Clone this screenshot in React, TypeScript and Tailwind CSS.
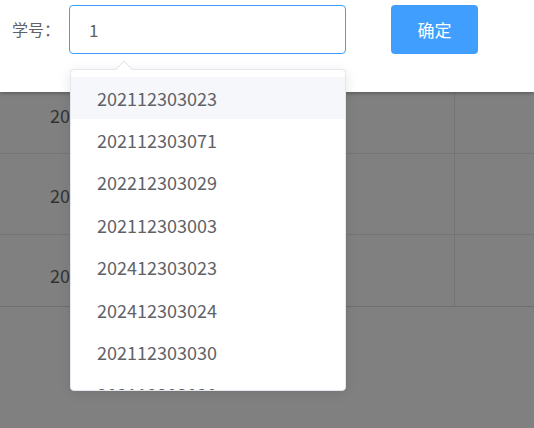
const options = [
  "202112303023",
  "202112303071",
  "202212303029",
  "202112303003",
  "202412303023",
  "202412303024",
  "202112303030",
  "202112303020",
]

const rows = [
  { h: "h-[62px]", pt: "pt-[11px]" },
  { h: "h-[81px]", pt: "pt-[29px]" },
  { h: "h-[72px]", pt: "pt-[28px]" },
]

export default function App() {
  return (
    <div
      className="relative h-[428px] w-[534px] overflow-hidden bg-[#808080]"
      style={{ fontFamily: '"Noto Sans CJK SC", "Noto Sans", sans-serif' }}
    >
      {/* search bar */}
      <div className="relative z-10 flex h-[92px] items-start bg-white pt-[5px] shadow-[0_1px_4px_rgba(0,0,0,0.35)]">
        <span className="ml-[12px] mt-[13px] w-[57px] text-[16px] leading-[22px] text-[#606266]">学号：</span>
        <div className="flex h-[49px] w-[277px] items-center rounded-[4px] border border-[#409eff] bg-white pl-[19px] text-[17px] text-[#606266]">
          1
        </div>
        <button className="ml-[45px] h-[49px] w-[87px] rounded-[4px] bg-[#409eff] text-[17px] text-white">
          确定
        </button>
      </div>

      {/* dimmed table */}
      <div className="flex flex-col">
        {rows.map((r, i) => (
          <div
            key={i}
            className={`flex ${r.h} border-b ${i === 2 ? "border-[#6f6f71]" : "border-[#747476]"}`}
          >
            <div className={`w-[455px] border-r border-[#747476] pl-[50px] ${r.pt} text-[18px] leading-[24px] text-[#333333]`}>
              <span className="block w-[20px] overflow-hidden whitespace-nowrap">2021</span>
            </div>
            <div className="flex-1" />
          </div>
        ))}
      </div>

      {/* autocomplete dropdown */}
      <div className="absolute left-[70px] top-[69px] z-20 h-[322px] w-[276px] rounded-[4px] border border-[#e4e7ed] bg-white shadow-[0_2px_12px_rgba(0,0,0,0.1)]">
        <div className="absolute -top-[7px] left-[47px] h-[12px] w-[12px] rotate-45 border-l border-t border-[#e4e7ed] bg-white" />
        <div className="relative h-full overflow-hidden rounded-[4px] pt-[7px]">
          {options.map((o, i) => (
            <div
              key={o}
              className={`flex h-[42.4px] items-center pl-[26px] text-[18px] text-[#606266] ${i === 0 ? "bg-[#f5f7fa]" : ""}`}
            >
              {o}
            </div>
          ))}
        </div>
      </div>
    </div>
  )
}
